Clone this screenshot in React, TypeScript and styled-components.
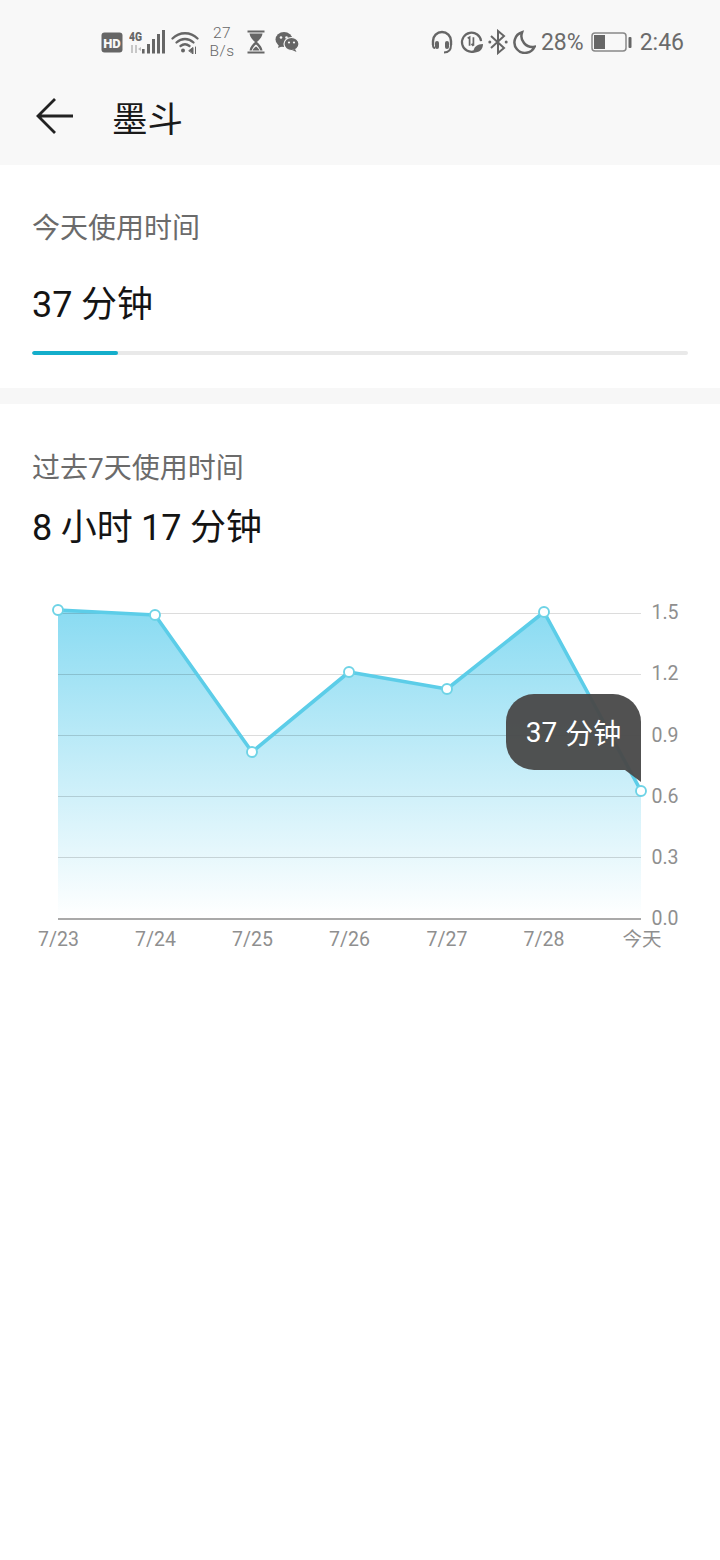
import React from 'react';
import styled, { createGlobalStyle } from 'styled-components';

const points: [number, number][] = [
  [58, 610],
  [155, 615],
  [252, 752],
  [349, 672],
  [447, 689],
  [544, 612],
  [641, 791],
];
const gridY = [613, 674, 735, 796, 857];
const yLabels = [
  ['1.5', 612],
  ['1.2', 673],
  ['0.9', 735],
  ['0.6', 796],
  ['0.3', 857],
  ['0.0', 918],
] as const;
const xLabels = ['7/23', '7/24', '7/25', '7/26', '7/27', '7/28', '今天'];
const CHART_TOP = 590;

const y = (v: number) => v - CHART_TOP;
const linePath = points.map(([px, py]) => `${px},${y(py)}`).join(' ');
const areaPath = `58,${y(918)} ${linePath} 641,${y(918)}`;

const App: React.FC = () => {
  return (
    <Page>
      <GlobalStyle />
      <Header>
        <StatusBar>
          <StatusGroup>
            <HdIcon />
            <SignalIcon />
            <WifiIcon />
            <NetSpeed>
              <span>27</span>
              <span>B/s</span>
            </NetSpeed>
            <HourglassIcon />
            <WechatIcon />
          </StatusGroup>
          <RightGroup>
            <HeadsetIcon />
            <DataSaverIcon />
            <BluetoothIcon />
            <MoonIcon />
            <StatusText>28%</StatusText>
            <BatteryIcon />
            <StatusText>2:46</StatusText>
          </RightGroup>
        </StatusBar>
        <TitleBar>
          <svg width="38" height="36" viewBox="0 0 38 36" fill="none" stroke="#222" strokeWidth="2.8">
            <path d="M19 1 2 18l17 17M2 18h35" />
          </svg>
          <Title>墨斗</Title>
        </TitleBar>
      </Header>

      <TodaySection>
        <Label>今天使用时间</Label>
        <TodayValue>
          37 <Cjk>分钟</Cjk>
        </TodayValue>
        <Progress>
          <ProgressFill style={{ width: `${(86 / 656) * 100}%` }} />
        </Progress>
      </TodaySection>

      <Divider />

      <WeekSection>
        <Label>过去7天使用时间</Label>
        <WeekValue>
          8 <Cjk>小时</Cjk> 17 <Cjk>分钟</Cjk>
        </WeekValue>
      </WeekSection>

      <ChartWrap>
        <svg width="720" height="380" viewBox="0 0 720 380">
          <defs>
            <linearGradient id="area" x1="0" y1="0" x2="0" y2="1">
              <stop offset="0" stopColor="#83d9f1" />
              <stop offset="1" stopColor="#ffffff" />
            </linearGradient>
            <clipPath id="areaClip">
              <polygon points={areaPath} />
            </clipPath>
          </defs>
          {gridY.map((g) => (
            <line key={g} x1="58" x2="641" y1={y(g) + 0.5} y2={y(g) + 0.5} stroke="#dcdcdc" strokeWidth="1" />
          ))}
          <polygon points={areaPath} fill="url(#area)" opacity="0.95" />
          <g clipPath="url(#areaClip)">
            {gridY.map((g) => (
              <line key={g} x1="58" x2="641" y1={y(g) + 0.5} y2={y(g) + 0.5} stroke="#000" strokeOpacity="0.14" strokeWidth="1" />
            ))}
          </g>
          <line x1="58" x2="641" y1={y(919)} y2={y(919)} stroke="#8c8c8c" strokeWidth="1.4" />
          <polyline points={linePath} fill="none" stroke="#5ccde8" strokeWidth="3.6" strokeLinejoin="round" />
          {points.map(([px, py]) => (
            <circle key={px} cx={px} cy={y(py)} r="5" fill="#fff" stroke="#6ed3e6" strokeWidth="1.9" />
          ))}
          {yLabels.map(([t, ly]) => (
            <AxisText key={t} x="651.5" y={y(ly) + 7}>
              {t}
            </AxisText>
          ))}
          {xLabels.map((t, i) => (
            <AxisText key={t} x={points[i][0] + (i === 6 ? 1 : i < 4 ? 0.5 : 0)} y={y(946)} textAnchor="middle">
              {t}
            </AxisText>
          ))}
        </svg>
        <Tooltip>
          37 <Cjk>分钟</Cjk>
        </Tooltip>
      </ChartWrap>
    </Page>
  );
};

export default App;

const HdIcon = () => (
  <svg width="22" height="21" viewBox="0 0 22 21">
    <rect x="0.5" y="0.5" width="21" height="20" rx="3" fill="#666" />
    <text x="11" y="15.5" textAnchor="middle" fontFamily="Roboto, sans-serif" fontSize="13" fontWeight="900" fill="#f8f8f8">
      HD
    </text>
  </svg>
);

const SignalIcon = () => (
  <svg width="36" height="25" viewBox="0 0 36 25">
    <text x="0" y="11" fontFamily="Roboto, sans-serif" fontSize="12" fontWeight="900" fill="#666" textLength="13" lengthAdjust="spacingAndGlyphs">
      4G
    </text>
    <path d="M3 15v8M7 15v8" stroke="#bbb" strokeWidth="1.6" />
    <path d="M9 19l3-2v4z" fill="#bbb" />
    <g fill="#666">
      <rect x="13" y="19" width="2.6" height="4.5" />
      <rect x="18" y="14" width="3" height="9.5" />
      <rect x="23" y="9" width="3" height="14.5" />
      <rect x="28" y="4" width="3" height="19.5" />
      <rect x="33" y="0" width="3" height="23.5" />
    </g>
  </svg>
);

const WifiIcon = () => (
  <svg width="28" height="24" viewBox="0 0 28 24" fill="none" stroke="#666" strokeWidth="2.3" strokeLinecap="round">
    <path d="M1.5 8.5C8.5 1.5 19.5 1.5 26.5 8.5" />
    <path d="M5.5 12.5C10.5 7.8 17.5 7.8 22.5 12.5" />
    <path d="M9.5 16C12.5 13.6 15.5 13.6 18.5 16" />
    <circle cx="12" cy="20.5" r="2" fill="#666" stroke="none" />
    <path d="M18 20.5l4-3v6zM24.500 17v7" fill="#666" stroke="#666" strokeWidth="1" />
  </svg>
);

const HourglassIcon = () => (
  <svg width="18" height="24" viewBox="0 0 18 24" fill="#666">
    <rect x="0.5" y="0.5" width="17" height="2" />
    <rect x="0.5" y="21.5" width="17" height="2" />
    <path d="M2.5 3.5h13C15 7.5 12 10 10 12c2 2 5 4.500 5.500 8.500h-2.200C12.500 18 10.500 15.500 9 14.500 7.500 15.500 5.500 18 4.700 20.500H2.500C3 16.500 6 14 8 12 6 10 3 7.500 2.500 3.500z" />
    <path d="M5.500 20.500C6.500 18.500 8 17 9 16.500c1 .5 2.500 2 3.500 4z" />
  </svg>
);

const WechatIcon = () => (
  <svg width="24" height="20" viewBox="0 0 24 20" fill="#666" style={{ marginLeft: 4 }}>
    <ellipse cx="9" cy="7.500" rx="8.500" ry="7.500" />
    <path d="M4 12l-1 4 5-2z" />
    <ellipse cx="16.500" cy="12" rx="7.500" ry="6.500" stroke="#f8f8f8" strokeWidth="1.200" />
    <path d="M20 17l1.500 3-4.500-2z" />
    <g fill="#f8f8f8">
      <circle cx="6" cy="5.500" r="1.300" />
      <circle cx="11.500" cy="5.500" r="1.300" />
      <circle cx="14" cy="10.500" r="1.100" />
      <circle cx="19" cy="10.500" r="1.100" />
    </g>
  </svg>
);

const HeadsetIcon = () => (
  <svg width="22" height="24" viewBox="0 0 22 24" fill="none" stroke="#666" strokeWidth="2.400" style={{ marginRight: 2 }}>
    <path d="M2 15V11a9 9 0 0 1 18 0v4" />
    <rect x="4" y="11" width="4" height="8" rx="2" fill="#666" stroke="none" />
    <rect x="14" y="11" width="4" height="8" rx="2" fill="#666" stroke="none" />
    <path d="M2 15c0 2 .5 3 2 3M20 15c0 5-2 7.500-7 7.500" strokeWidth="2" />
  </svg>
);

const DataSaverIcon = () => (
  <svg width="23" height="24" viewBox="0 0 24 24" fill="none" stroke="#666" strokeWidth="2.300">
    <path d="M15 21.800A10 10 0 1 1 22 11" />
    <path d="M8 8l2-1v9" strokeWidth="1.800" />
    <path d="M14 7v9M14 16l-2-2" strokeWidth="1.800" />
    <path d="M14 23c0-6 4-9 10-9 0 6-4 9-10 9z" fill="#666" stroke="none" />
  </svg>
);

const BluetoothIcon = () => (
  <svg width="20" height="26" viewBox="0 0 20 26" fill="none" stroke="#666" strokeWidth="2">
    <path d="M3 7l13 12-6 5V2l6 5L3 19" />
    <circle cx="1.800" cy="13" r="1.500" fill="#666" stroke="none" />
    <circle cx="18.200" cy="13" r="1.500" fill="#666" stroke="none" />
  </svg>
);

const MoonIcon = () => (
  <svg width="23" height="24" viewBox="0 0 24 24" fill="none" stroke="#666" strokeWidth="2.600">
    <path d="M9.500 1.800A11 11 0 1 0 22.500 17 11.500 11.500 0 0 1 9.500 1.800z" />
  </svg>
);

const BatteryIcon = () => (
  <svg width="41" height="20" viewBox="0 0 41 20" style={{ margin: '0 3px 0 2px' }}>
    <rect x="1" y="1" width="34" height="18" rx="3" fill="none" stroke="#888" strokeWidth="1.500" />
    <rect x="3" y="3" width="11" height="14" fill="#666" />
    <rect x="37.500" y="5" width="3" height="11" rx="1" fill="#666" />
  </svg>
);

const GlobalStyle = createGlobalStyle`
  html, body {
    margin: 0;
    padding: 0;
    background: #fff;
  }
  body {
    font-family: Roboto, "Noto Sans CJK SC", sans-serif;
  }
`;

const Page = styled.div`
  width: 720px;
  height: 1560px;
  background: #fff;
  overflow: hidden;
`;

const Header = styled.header`
  height: 165px;
  background: #f8f8f8;
`;

const StatusBar = styled.div`
  height: 84px;
  padding: 0 36px 0 101px;
  box-sizing: border-box;
  display: flex;
  align-items: center;
  justify-content: space-between;
`;

const StatusGroup = styled.div`
  display: flex;
  align-items: center;
  gap: 6px;
`;

const RightGroup = styled(StatusGroup)`
  gap: 5px;
`;

const NetSpeed = styled.div`
  display: flex;
  flex-direction: column;
  align-items: center;
  width: 26px;
  margin: 0 6px 0 4px;
  font-size: 15.5px;
  line-height: 18px;
  letter-spacing: 0.5px;
  font-weight: 300;
  color: #666;
`;

const StatusText = styled.span`
  font-size: 23px;
  color: #6b6b6b;
`;

const TitleBar = styled.div`
  display: flex;
  align-items: center;
  height: 64px;
  padding-left: 36px;
  gap: 38px;
`;

const Title = styled.h1`
  margin: 0;
  font-family: "Noto Sans CJK SC", sans-serif;
  font-size: 35.5px;
  font-weight: 400;
  color: #1a1a1a;
`;

const Cjk = styled.span`
  font-family: "Noto Sans CJK SC", sans-serif;
`;

const TodaySection = styled.section`
  height: 223px;
  box-sizing: border-box;
  padding: 44px 32px 0;
`;

const Label = styled.div`
  font-size: 28px;
  line-height: 40px;
  color: #6b6b6b;
`;

const TodayValue = styled.div`
  margin-top: 28px;
  font-size: 36px;
  line-height: 48px;
  word-spacing: -0.5px;
  color: #141414;
`;

const Progress = styled.div`
  margin-top: 22px;
  height: 4px;
  border-radius: 2px;
  background: #e9e9e9;
  overflow: hidden;
`;

const ProgressFill = styled.div`
  height: 100%;
  background: #14aecb;
  border-radius: 2px;
`;

const Divider = styled.div`
  height: 16px;
  background: #f7f7f7;
`;

const WeekSection = styled.section`
  box-sizing: border-box;
  height: 186px;
  padding: 45px 32px 0;
`;

const WeekValue = styled.div`
  margin-top: 11px;
  font-size: 36px;
  line-height: 48px;
  word-spacing: -0.5px;
  color: #141414;
`;

const ChartWrap = styled.div`
  position: relative;
  height: 380px;
`;

const AxisText = styled.text`
  font-family: Roboto, "Noto Sans CJK SC", sans-serif;
  font-size: 19.5px;
  fill: #8f8f8f;
`;

const Tooltip = styled.div`
  position: absolute;
  left: 506px;
  top: 104px;
  width: 135px;
  height: 76px;
  box-sizing: border-box;
  display: flex;
  align-items: center;
  justify-content: center;
  gap: 8px;
  background: rgba(74, 74, 74, 0.96);
  border-radius: 28px 28px 0 28px;
  color: #fff;
  font-size: 28px;

  &::after {
    content: '';
    position: absolute;
    right: 0;
    top: 76px;
    width: 16px;
    height: 12px;
    background: rgba(74, 74, 74, 0.96);
    clip-path: polygon(0 0, 100% 0, 100% 100%);
  }
`;
